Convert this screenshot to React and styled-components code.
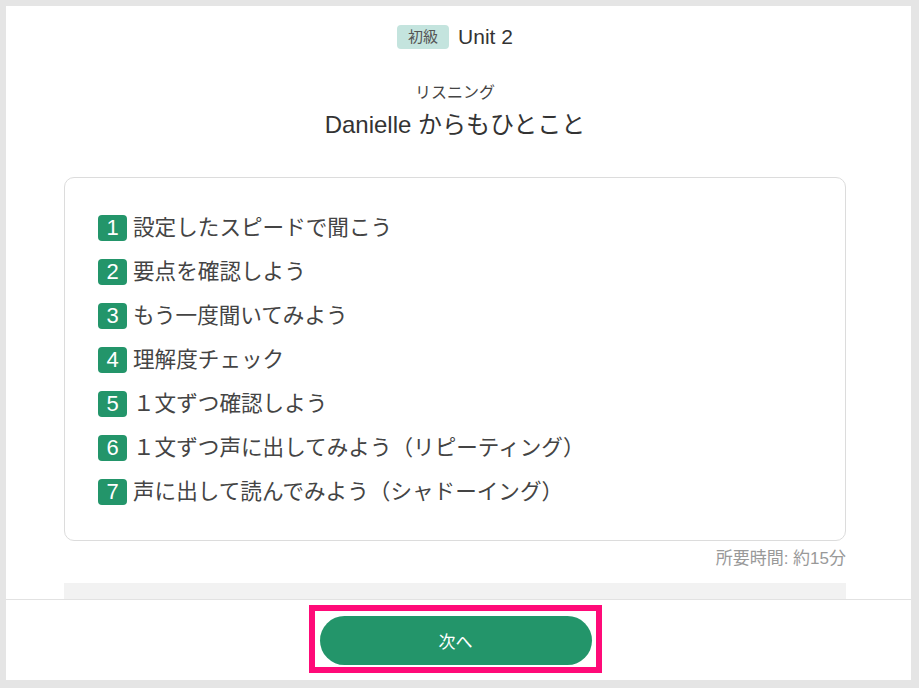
import styled, { createGlobalStyle } from 'styled-components';

const steps = [
  '設定したスピードで聞こう',
  '要点を確認しよう',
  'もう一度聞いてみよう',
  '理解度チェック',
  '１文ずつ確認しよう',
  '１文ずつ声に出してみよう（リピーティング）',
  '声に出して読んでみよう（シャドーイング）',
];

const GlobalStyle = createGlobalStyle`
  html, body {
    margin: 0;
    padding: 0;
    background: #e5e5e5;
  }
  body {
    font-family: "Liberation Sans", "Noto Sans CJK JP", sans-serif;
    color: #333;
  }
`;

const Page = styled.div`
  box-sizing: border-box;
  height: 688px;
  padding: 6px 8px 8px 6px;
`;

const Panel = styled.div`
  height: 100%;
  background: #fff;
  display: flex;
  flex-direction: column;
`;

const Content = styled.main`
  flex: 1;
  padding: 19px 65px 0 58px;
  display: flex;
  flex-direction: column;
  align-items: stretch;
`;

const LevelRow = styled.div`
  height: 24px;
  display: flex;
  align-items: center;
  justify-content: center;
  gap: 9px;
`;

const Level = styled.span`
  height: 24px;
  padding: 0 11px;
  border-radius: 4px;
  background: #c4e4de;
  color: #555;
  font-size: 15px;
  line-height: 24px;
`;

const Unit = styled.span`
  font-size: 21px;
  color: #333;
`;

const Category = styled.div`
  margin-top: 34px;
  font-size: 16px;
  line-height: 20px;
  text-align: center;
  color: #444;
`;

const Title = styled.h1`
  margin: 7px 0 0;
  font-size: 24px;
  line-height: 30px;
  font-weight: normal;
  text-align: center;
  color: #333;
`;

const Card = styled.ol`
  list-style: none;
  margin: 37px 0 0;
  height: 364px;
  box-sizing: border-box;
  padding: 37px 33px 35px;
  border: 1px solid #dcdcdc;
  border-radius: 10px;
  display: flex;
  flex-direction: column;
  gap: 18px;
`;

const Step = styled.li`
  height: 26px;
  display: flex;
  align-items: center;
  gap: 6px;
  font-size: 21.6px;
  line-height: 26px;
  color: #444;
  white-space: nowrap;
`;

const Num = styled.span`
  width: 29px;
  height: 26px;
  border-radius: 4px;
  background: #23956a;
  color: #fff;
  font-size: 22px;
  display: flex;
  align-items: center;
  justify-content: center;
  flex: none;
`;

const Duration = styled.div`
  margin-top: 8px;
  font-size: 17px;
  line-height: 20px;
  text-align: right;
  color: #999;
`;

const Strip = styled.div`
  margin-top: 14px;
  height: 16px;
  background: #f2f2f2;
`;

const Footer = styled.footer`
  border-top: 1px solid #e2e2e2;
  height: 80px;
  box-sizing: content-box;
  padding-right: 7px;
  display: flex;
  justify-content: center;
  align-items: flex-start;
`;

const Highlight = styled.div`
  margin-top: 5px;
  padding: 5px 4px 2px 5px;
  border: 6px solid #ff0a78;
  display: flex;
`;

const NextButton = styled.button`
  width: 272px;
  height: 49px;
  border: none;
  border-radius: 25px;
  background: #23956a;
  color: #fff;
  font-family: inherit;
  font-size: 17px;
  cursor: pointer;
`;

export default function App() {
  return (
    <>
      <GlobalStyle />
      <Page>
        <Panel>
          <Content>
            <LevelRow>
              <Level>初級</Level>
              <Unit>Unit 2</Unit>
            </LevelRow>
            <Category>リスニング</Category>
            <Title>Danielle からもひとこと</Title>
            <Card>
              {steps.map((text, i) => (
                <Step key={i}>
                  <Num>{i + 1}</Num>
                  {text}
                </Step>
              ))}
            </Card>
            <Duration>所要時間: 約15分</Duration>
            <Strip />
          </Content>
          <Footer>
            <Highlight>
              <NextButton>次へ</NextButton>
            </Highlight>
          </Footer>
        </Panel>
      </Page>
    </>
  );
}
